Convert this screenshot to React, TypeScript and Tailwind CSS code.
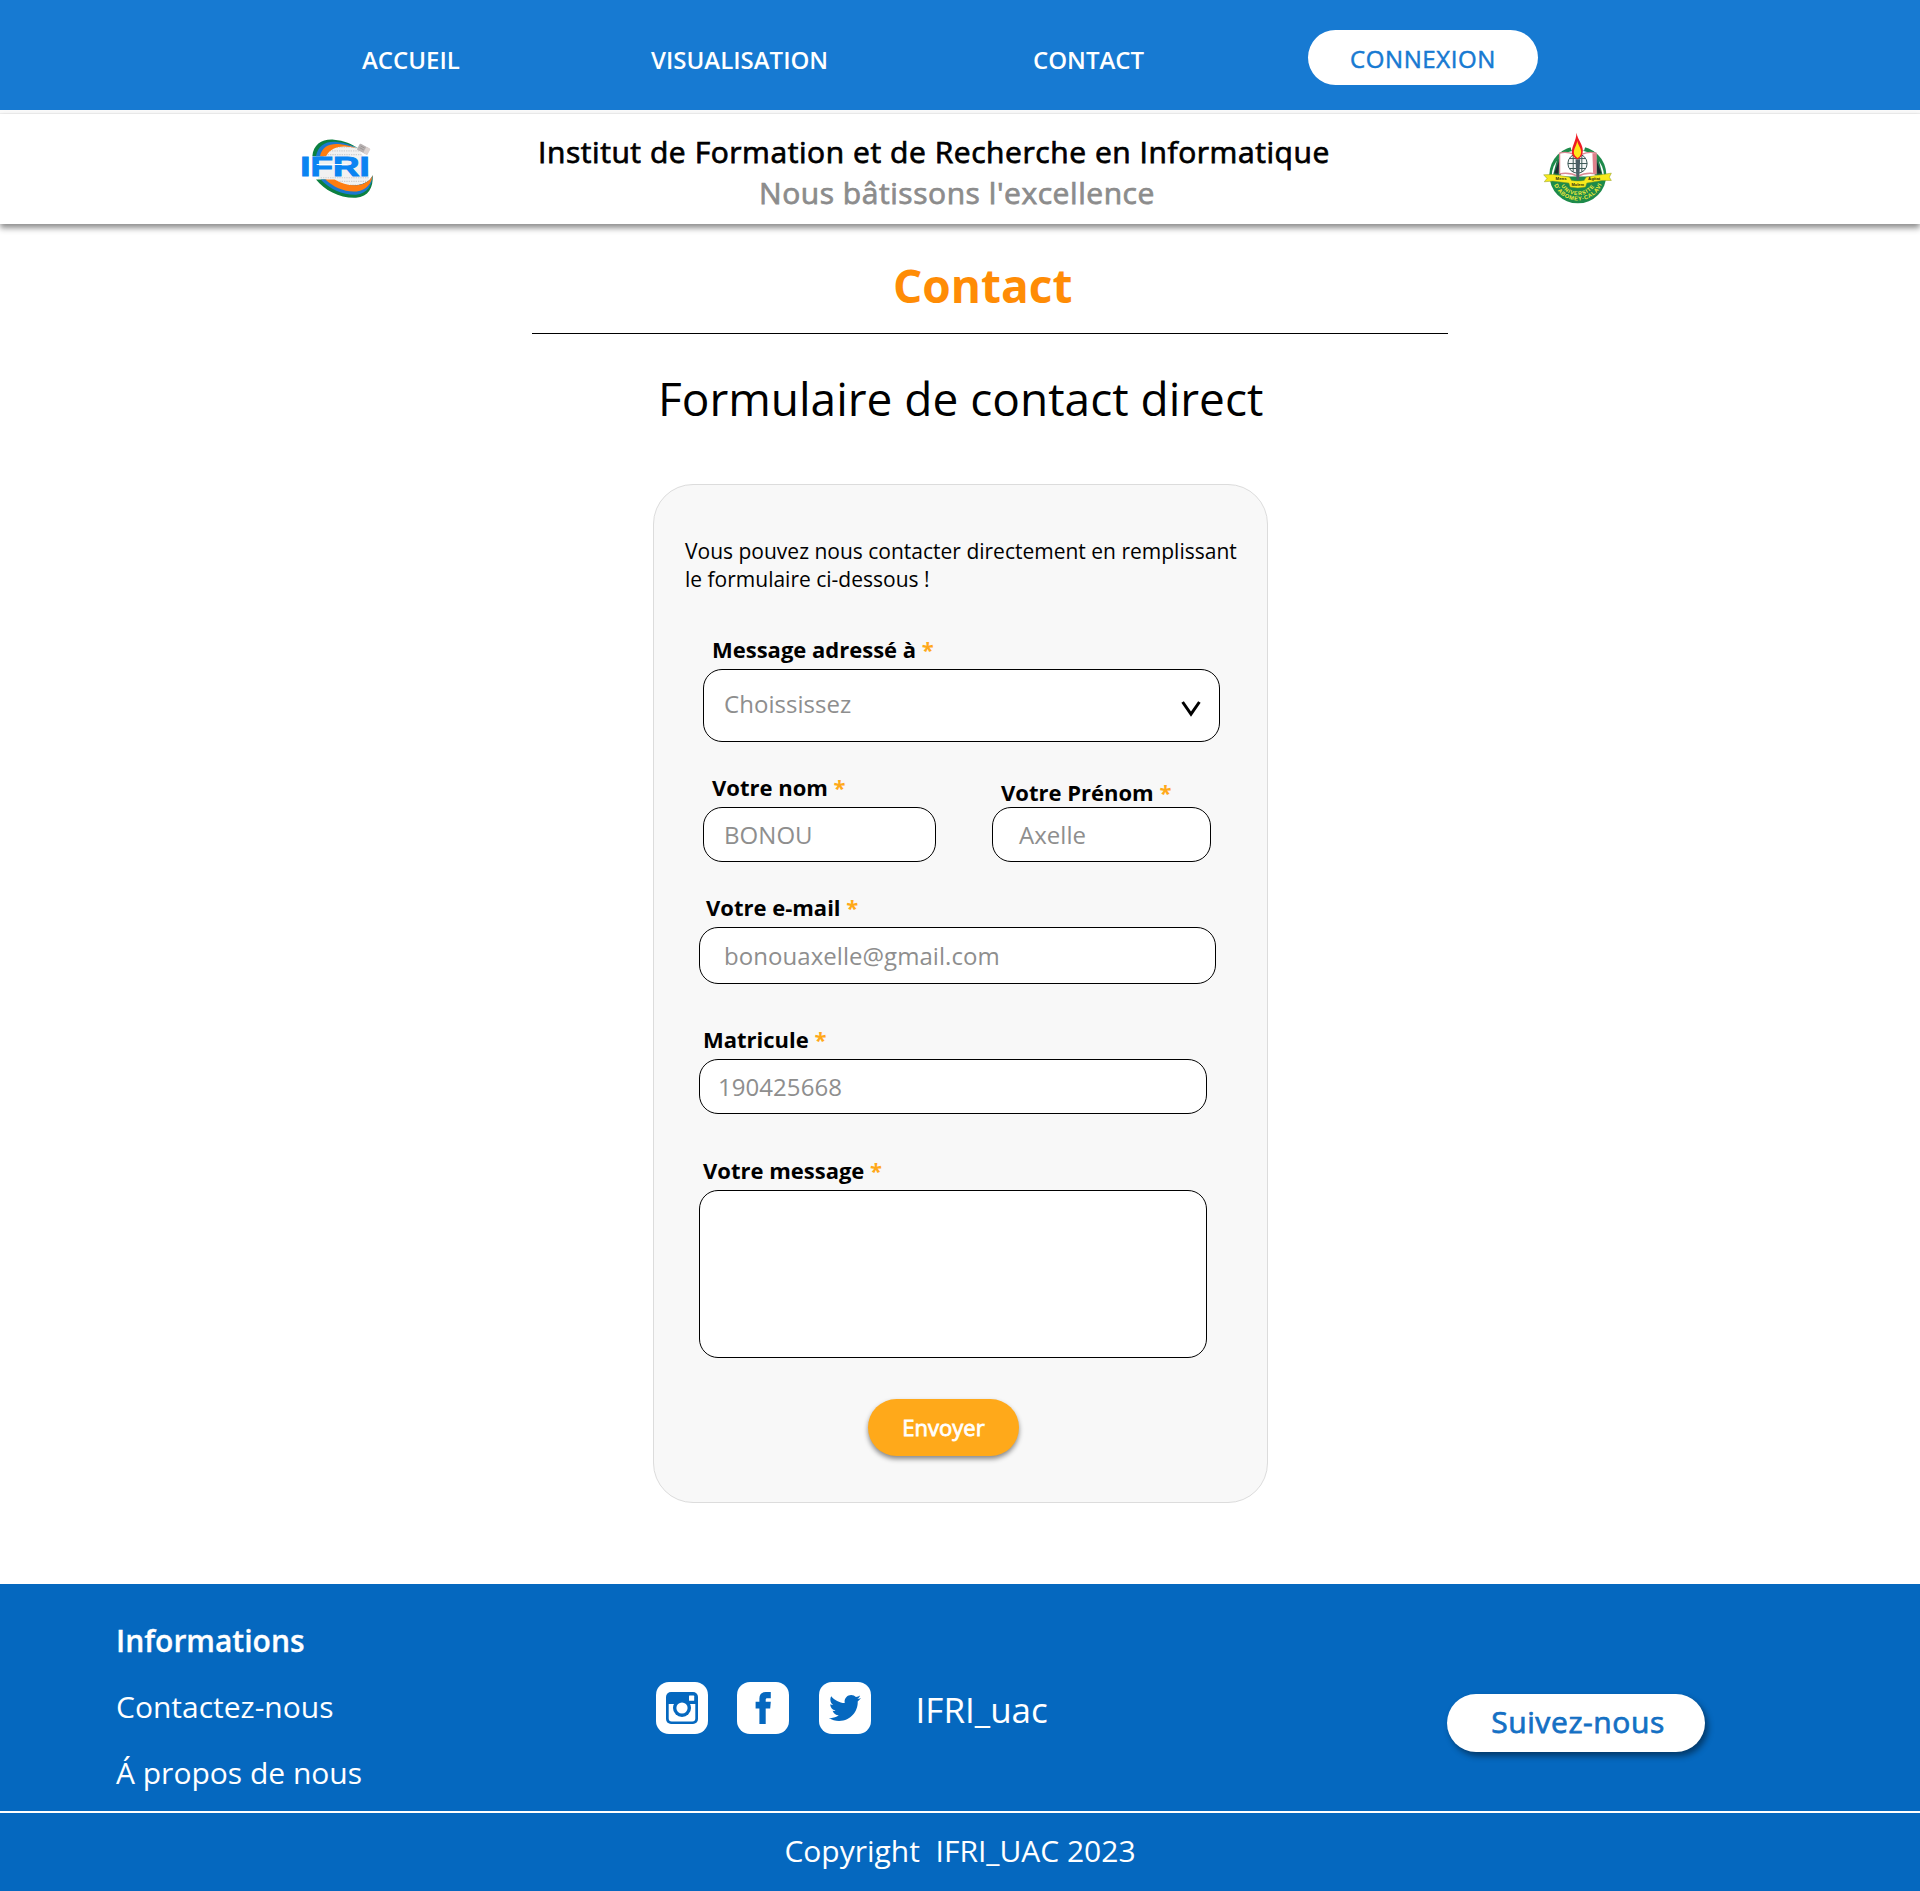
import type { ReactNode } from "react";
import { FaTwitter } from "react-icons/fa";

function IfriLogo() {
  return (
    <svg width="74" height="61" viewBox="30 38 222 184" preserveAspectRatio="none" aria-label="IFRI">
      <path d="M92 92 C108 62 150 48 205 72 C225 95 240 130 236 165 C226 190 160 190 84 162 Z" fill="#f1f1f1" />
      <g stroke="#cfcfcf" strokeWidth="3.5" strokeDasharray="4 3" fill="none">
        <path d="M126 66H196" />
        <path d="M112 77H208" />
        <path d="M106 88H214" />
        <path d="M92 158H238" />
        <path d="M120 169H236" />
        <path d="M145 180H230" />
      </g>
      <path d="M67 93 C70 56 98 40 132 43 C162 45 186 56 206 70 C166 52 112 50 98 93 Z" fill="#0c8040" />
      <path d="M78 93 C84 60 108 47 140 50 C165 52 186 60 203 70 C164 55 116 58 102 93 Z" fill="#1b78cf" />
      <path d="M90 93 C96 64 118 54 146 56 C168 58 186 63 200 70 C166 58 124 60 108 93 Z" fill="#ff7d10" />
      <path d="M78 163 C104 196 150 220 198 218 C236 214 250 188 248 150 C236 190 150 190 106 163 Z" fill="#0c8040" />
      <path d="M92 163 C118 192 160 210 198 209 C232 204 246 182 248 150 C234 190 150 188 108 163 Z" fill="#1b78cf" />
      <path d="M106 163 C130 186 165 202 200 199 C230 194 244 176 248 150 C232 186 176 190 134 163 Z" fill="#ff7d10" />
      <g transform="rotate(28 222 72)">
        <rect x="203" y="62" width="34" height="21" rx="3" fill="#b9b3b3" />
        <rect x="225" y="62" width="14" height="21" rx="2" fill="#dcd2cf" />
        <path d="M208 68h14M208 74h14" stroke="#8f8a8a" strokeWidth="2" />
      </g>
      <text
        x="31"
        y="152"
        fontSize="83"
        fontWeight="700"
        fontFamily="Liberation Sans, sans-serif"
        textLength="208"
        lengthAdjust="spacingAndGlyphs"
        fill="#0a84f2"
        stroke="#0a84f2"
        strokeWidth="3"
      >
        IFRI
      </text>
      <path d="M80 118H172" stroke="#ffffff" strokeWidth="3" />
    </svg>
  );
}

function UacLogo() {
  return (
    <svg width="69" height="73" viewBox="36 34 208 220" aria-label="Université d'Abomey-Calavi">
      <defs>
        <path id="arcUpper" d="M85 186 A60 60 0 0 0 197 186" />
        <path id="arcLower" d="M68 190 A78 78 0 0 0 214 190" />
      </defs>
      <circle cx="141" cy="163" r="86" fill="#1d8a4a" />
      <path d="M62 168 A79 79 0 0 1 220 168 Z" fill="#ffffff" />
      <path d="M118 76 A90 90 0 0 1 164 76 L160 90 H122 Z" fill="#ffffff" />
      <path d="M66 164 L78 118 L90 108 V164 Z M216 164 L204 118 L192 108 V164 Z" fill="#207a4a" />
      <path d="M70 158 L86 116 L82 160 Z M212 158 L196 116 L200 160 Z" fill="#1c2b33" />
      <path
        d="M86 98 C105 92 128 98 141 108 C154 98 177 92 196 98 V160 C175 156 155 160 141 168 C127 160 107 156 86 160 Z"
        fill="#ffffff"
        stroke="#d98a94"
        strokeWidth="4"
      />
      <path d="M185 98 L196 98 V160 L187 157 Z" fill="#e0808c" />
      <g fill="#f4f7f6" stroke="#3d5a58" strokeWidth="3">
        <circle cx="140" cy="129" r="29" />
        <path fill="none" d="M111 129H169M116 114H164M116 144H164M127 104V154M153 104V154" />
      </g>
      <path d="M134 116h14l-3 62h-8z" fill="#4b5f66" />
      <path
        d="M137 36 C140 58 158 72 156 92 C155 106 148 114 140 116 C130 112 122 104 123 92 C124 74 136 60 137 36 Z"
        fill="#ef1c24"
      />
      <path d="M139 60 C142 74 152 84 151 95 C150 106 145 110 140 112 C134 108 128 102 129 94 C130 80 138 74 139 60 Z" fill="#ffe71a" />
      <path
        d="M38 163 L66 162 Q90 166 116 170 L122 180 Q141 184 160 180 L166 170 Q192 166 216 162 L242 158 L236 170 L242 180 L214 180 L168 188 L164 200 Q141 205 118 200 L114 188 L66 182 L40 184 L48 174 Z"
        fill="#f7ea1c"
        stroke="#8c9a1e"
        strokeWidth="1.5"
      />
      <g fontFamily="Liberation Sans, sans-serif" fontWeight="700" fontSize="13" fill="#2a2a10">
        <text x="74" y="178">
          Mens
        </text>
        <text x="122" y="197" fontSize="12">
          Molem
        </text>
        <text x="172" y="178">
          Agitat
        </text>
      </g>
      <g fontFamily="Liberation Sans, sans-serif" fontWeight="700" fill="#f4ec3a">
        <text fontSize="16">
          <textPath href="#arcUpper" startOffset="12" textLength="118">
            UNIVERSITE
          </textPath>
        </text>
        <text fontSize="17">
          <textPath href="#arcLower" startOffset="4" textLength="182">
            D'ABOMEY-CALAVI
          </textPath>
        </text>
      </g>
    </svg>
  );
}

function InstagramIcon() {
  return (
    <svg width="52" height="52" viewBox="0 0 52 52">
      <rect x="10" y="10" width="32" height="32" rx="5" fill="#0568bf" />
      <path d="M12.7 22H39.3V36.5a3 3 0 0 1-3 3H15.7a3 3 0 0 1-3-3Z" fill="#ffffff" />
      <circle cx="26" cy="26" r="9" fill="#0568bf" />
      <circle cx="26" cy="26" r="5.6" fill="#ffffff" />
      <rect x="33" y="13.6" width="5.2" height="5.2" rx="0.6" fill="#ffffff" />
    </svg>
  );
}

function FacebookIcon() {
  return (
    <svg width="52" height="52" viewBox="0 0 52 52">
      <path
        d="M22.4 42V26.4H18.6V19.8H22.4V16.6C22.4 12 24.6 10 28.8 10H33.8V16.2H30.4C29 16.2 28.7 16.8 28.7 18V19.8H33.8L33.2 26.4H28.7V42Z"
        fill="#0568bf"
      />
    </svg>
  );
}

function Tile({ children }: { children: ReactNode }) {
  return <a className="flex size-[52px] items-center justify-center rounded-[13px] bg-white text-[#0568bf]">{children}</a>;
}

function Label({ children, className }: { children: ReactNode; className: string }) {
  return (
    <label className={`block text-[22px] leading-[30px] font-bold whitespace-nowrap text-black ${className}`}>
      {children} <span className="text-[#ffa91a]">*</span>
    </label>
  );
}

function Field({ children, className }: { children?: ReactNode; className: string }) {
  return (
    <div className={`flex items-center rounded-[19px] border border-black bg-white text-2xl tracking-[0.05px] text-[#8e8e8e] ${className}`}>
      {children}
    </div>
  );
}

export default function App() {
  return (
    <div className="flex h-[1891px] w-[1920px] flex-col bg-white font-['Open_Sans',sans-serif] text-black">
      <nav className="flex h-[110px] shrink-0 items-start bg-[#177ad2] pl-[362px] text-2xl leading-8 font-semibold text-white">
        <a className="mt-11 w-[289px]">ACCUEIL</a>
        <a className="mt-11 w-[382px]">VISUALISATION</a>
        <a className="mt-11 w-[275px]">CONTACT</a>
        <a className="mt-[30px] h-[55px] w-[230px] rounded-full bg-white text-center text-2xl leading-[57px] font-normal tracking-[0.6px] text-[#177ad2] [-webkit-text-stroke:0.5px_#177ad2]">
          CONNEXION
        </a>
      </nav>

      <div className="h-1 shrink-0 border-b border-[#f0f0f0] bg-[#fafafa]" />
      <header className="flex h-[110px] shrink-0 items-start bg-white pl-[300px] shadow-[0_4px_6px_rgba(0,0,0,0.45)]">
        <div className="mt-6 w-[238px]">
          <IfriLogo />
        </div>
        <div className="mt-[17px] w-[1005px] text-[30px] leading-[41px] whitespace-nowrap">
          <h1 className="tracking-[0.56px] [-webkit-text-stroke:0.75px_#000]">
            Institut de Formation et de Recherche en Informatique
          </h1>
          <p className="pl-[221px] tracking-[0.55px] text-[#8c8c8c] [-webkit-text-stroke:0.75px_#8c8c8c]">
            Nous bâtissons l'excellence
          </p>
        </div>
        <div className="mt-[18px]">
          <UacLogo />
        </div>
      </header>

      <main className="flex-1">
        <h2 className="mt-[31px] ml-[893px] text-[46px] leading-[60px] font-bold text-[#ff8c05]">Contact</h2>
        <div className="mt-[18px] ml-[532px] h-px w-[916px] bg-black" />
        <h3 className="mt-[34px] ml-[658px] text-[46px] leading-[60px]">Formulaire de contact direct</h3>

        <form className="mt-14 ml-[653px] h-[1019px] w-[615px] rounded-[40px] border border-[#dcdcdc] bg-[#f8f8f8] pt-[52px]">
          <p className="ml-[31px] text-[21px] leading-7 whitespace-nowrap">
            Vous pouvez nous contacter directement en remplissant
            <br />
            le formulaire ci-dessous !
          </p>

          <Label className="mt-[41px] ml-[58px]">Message adressé à</Label>
          <Field className="mt-[5px] ml-[49px] h-[73px] w-[517px] justify-between pr-[18px] pb-1 pl-5">
            Choississez
            <svg className="mt-2.5" width="20" height="16" viewBox="0 0 20 16" fill="none" stroke="#000000" strokeWidth="3">
              <path d="M1.6 1L10 13.2L18.4 1" />
            </svg>
          </Field>

          <div className="mt-[30px] ml-[49px] flex items-end gap-14">
            <div>
              <Label className="mb-[5px] ml-[9px]">Votre nom</Label>
              <Field className="h-[55px] w-[233px] pl-5">BONOU</Field>
            </div>
            <div>
              <Label className="ml-[9px]">Votre Prénom</Label>
              <Field className="h-[55px] w-[219px] pl-[26px]">Axelle</Field>
            </div>
          </div>

          <Label className="mt-[30px] ml-[52px]">Votre e-mail</Label>
          <Field className="mt-[5px] ml-[45px] h-[57px] w-[517px] pl-6">bonouaxelle@gmail.com</Field>

          <Label className="mt-10 ml-[49px]">Matricule</Label>
          <Field className="mt-[5px] ml-[45px] h-[55px] w-[508px] pl-[18px]">190425668</Field>

          <Label className="mt-[41px] ml-[49px]">Votre message</Label>
          <Field className="mt-[5px] ml-[45px] h-[168px] w-[508px]" />

          <button
            type="button"
            className="mt-[41px] ml-[214px] block h-[57px] w-[151px] rounded-full bg-[#ffa91a] text-[22px] leading-[57px] text-white shadow-[0_3px_5px_rgba(0,0,0,0.45)] [-webkit-text-stroke:0.8px_#fff]"
          >
            Envoyer
          </button>
        </form>
      </main>

      <footer className="h-[307px] shrink-0 bg-[#0568bf] text-white">
        <div className="flex h-[229px] items-start border-b-2 border-white pl-[116px]">
          <div className="flex w-[540px] flex-col gap-[26px] pt-[37px] text-[30px] leading-10">
            <h4 className="font-semibold [-webkit-text-stroke:0.3px_#fff]">Informations</h4>
            <a>Contactez-nous</a>
            <a>Á propos de nous</a>
          </div>
          <div className="mt-[98px] flex w-[791px] items-center">
            <div className="flex gap-[29.3px]">
              <Tile>
                <InstagramIcon />
              </Tile>
              <Tile>
                <FacebookIcon />
              </Tile>
              <Tile>
                <FaTwitter size={32} />
              </Tile>
            </div>
            <span className="mt-1 ml-[45px] text-[35px] leading-[48px]">IFRI_uac</span>
          </div>
          <a className="mt-[110px] h-[58px] w-[258px] rounded-full bg-white pl-1 text-center text-[30px] leading-[55px] tracking-[0.6px] text-[#1470c4] shadow-[3px_4px_6px_rgba(0,0,0,0.45)] [-webkit-text-stroke:0.75px_#1470c4]">
            Suivez-nous
          </a>
        </div>
        <p className="mt-[18px] text-center text-[30px] leading-10">Copyright&nbsp; IFRI_UAC 2023</p>
      </footer>
    </div>
  );
}
